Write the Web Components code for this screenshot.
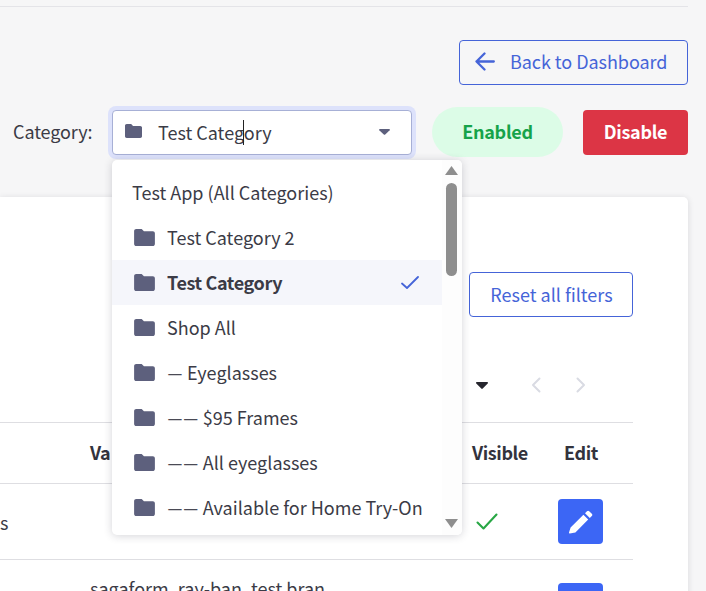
<!DOCTYPE html>
<html lang="en">
<head>
<meta charset="utf-8">
<title>Category</title>
<style>
html,body{margin:0;height:591px;overflow:hidden;background:#f6f6f7}
body{font:18px/27px "Noto Sans CJK JP","Noto Sans",sans-serif;color:#3b3b46}
</style>
</head>
<body>
<cat-page>
  <page-toolbar slot="toolbar"></page-toolbar>
  <filter-card slot="card"></filter-card>
</cat-page>
<script>
const FOLDER='<svg viewBox="0 0 22 18" aria-hidden="true"><path fill="#5d607d" d="M2.2 0H8l2.4 2.4h9.4c1.2 0 2.2 1 2.2 2.2v11.2c0 1.2-1 2.2-2.2 2.2H2.2C1 18 0 17 0 15.8V2.2C0 1 1 0 2.2 0z"/></svg>';
function def(name,html){
  customElements.define(name,class extends HTMLElement{
    constructor(){super();this.attachShadow({mode:'open'}).innerHTML=html;}
  });
}
def('cat-page',`<style>
:host{display:block;width:688px}
.rule{height:1px;background:#e4e4e8;margin-top:6px}
::slotted([slot=card]){margin-top:40px}
</style><div class="rule"></div><slot name="toolbar"></slot><slot name="card"></slot>`);

def('page-toolbar',`<style>
:host{display:block;padding-top:33px}
.back{display:flex;justify-content:flex-end}
.row{display:flex;align-items:center;margin-top:22px;height:50px}
.label{margin-left:13px;width:99px;flex:none;margin-top:-1px;letter-spacing:-.1px}
a{box-sizing:border-box;height:45px;border:1px solid #4564d8;border-radius:4px;color:#4564d8;display:flex;align-items:center;width:229px;padding:0 0 2px 15px;gap:15px;font-size:18px;letter-spacing:-.05px}
a svg{width:20px;height:19px;flex:none}
.pill{margin-left:20px;width:131px;height:50px;border-radius:25px;background:#dcfce7;color:#16a34a;font-weight:700;letter-spacing:-.3px;display:flex;align-items:center;justify-content:center;box-sizing:border-box;padding-bottom:2px}
.dis{margin-left:20px;width:105px;height:45px;border-radius:4px;background:#dc3545;color:#fff;font-weight:700;letter-spacing:-.3px;display:flex;align-items:center;justify-content:center;box-sizing:border-box;padding-bottom:2px}
</style>
<div class="back"><a><svg viewBox="0 0 20 19" fill="none" stroke="#4564d8" stroke-width="2.3" stroke-linecap="round" stroke-linejoin="round"><path d="M18.8 9.5H1.5M9.5 1.5l-8 8 8 8"/></svg>Back to Dashboard</a></div>
<div class="row"><span class="label">Category:</span><category-select></category-select><span class="pill">Enabled</span><span class="dis">Disable</span></div>`);

def('category-select',`<style>
:host{display:block;position:relative;width:300px;height:45px;flex:none}
.box{box-sizing:border-box;height:45px;background:#fff;border:1px solid #a7b0d6;border-radius:4px;box-shadow:0 0 0 4px #dde2fb;display:flex;align-items:center;padding-left:12px}
.box svg.f{width:17px;height:14px;flex:none;margin-top:-2px}
.val{margin-left:16px;position:relative}
.caret{position:absolute;left:131px;top:10px;width:1px;height:25px;background:#222}
.tri{margin-left:auto;margin-right:21px;width:11px;height:6px;flex:none;margin-top:-1px}
</style>
<div class="box"><svg class="f" viewBox="0 0 22 18">${FOLDER.match(/<path.*\/>/)[0]}</svg><span class="val">Test Category</span>
<svg class="tri" viewBox="0 0 11 7" preserveAspectRatio="none"><path fill="#5d607d" d="M1 0h9c.8 0 1.2.9.7 1.5L6.2 6.3c-.4.4-1 .4-1.4 0L.3 1.5C-.2.9.2 0 1 0z"/></svg></div>
<span class="caret"></span>
<category-menu></category-menu>`);

def('category-menu',`<style>
:host{display:flex;position:absolute;z-index:5;left:0;top:50px;width:350px;height:375px;background:#fff;border-radius:5px;box-shadow:0 1px 8px rgba(40,40,60,.2)}
.list{flex:1;padding-top:10px;overflow:hidden}
.bar{width:20px;flex:none;position:relative;background:#fdfdfd;border-radius:0 5px 5px 0}
.up,.dn{width:13px;height:9px;position:absolute;left:3px}
.up{top:6px}.dn{bottom:7px}
.th{position:absolute;left:4px;top:23px;width:11px;height:93px;border-radius:6px;background:#8e8e8e}
</style>
<div class="list">
<menu-item plain>Test App (All Categories)</menu-item>
<menu-item>Test Category 2</menu-item>
<menu-item selected>Test Category</menu-item>
<menu-item>Shop All</menu-item>
<menu-item><dash-mark>—</dash-mark> Eyeglasses</menu-item>
<menu-item><dash-mark>——</dash-mark> $95 Frames</menu-item>
<menu-item><dash-mark>——</dash-mark> All eyeglasses</menu-item>
<menu-item><dash-mark>——</dash-mark> Available for Home Try-On</menu-item>
</div>
<div class="bar">
<svg class="up" viewBox="0 0 13 9"><path fill="#8e8e8e" d="M6.5 0 13 9H0z"/></svg>
<span class="th"></span>
<svg class="dn" viewBox="0 0 13 9"><path fill="#8e8e8e" d="M0 0h13L6.5 9z"/></svg>
</div>`);

def('dash-mark',`<style>:host{display:inline;font-family:Lato,sans-serif;font-size:20px;line-height:0;color:#4a4a55}</style><slot></slot>`);

customElements.define('menu-item',class extends HTMLElement{
  constructor(){super();this.attachShadow({mode:'open'}).innerHTML=`<style>
:host{display:block;height:45px;padding-left:22px;padding-right:23px;white-space:nowrap;position:relative}
:host([plain]){padding-left:20px}
:host([selected]){background:#f5f6fb;font-weight:700;letter-spacing:-.38px}
.row{display:flex;align-items:center;height:45px}
.f{width:21px;height:17px;margin-right:12px;flex:none;display:block}
.t{display:block;white-space:pre;line-height:27px}
.c{margin-left:auto;width:18px;height:13px;flex:none}
</style><div class="row"><span id="i" style="display:contents"></span><span class="t"><slot></slot></span><span id="k" style="display:contents"></span></div>`;}
  connectedCallback(){
    if(!this.hasAttribute('plain'))this.shadowRoot.getElementById('i').innerHTML=FOLDER.replace('<svg ','<svg class="f" ');
    if(this.hasAttribute('selected'))this.shadowRoot.getElementById('k').innerHTML='<svg class="c" viewBox="0 0 18 13" fill="none" stroke="#4564d8" stroke-width="1.8" stroke-linecap="round" stroke-linejoin="round"><path d="M1 7.5 6 12 17 1"/></svg>';
  }
});

def('filter-card',`<style>
:host{display:block;height:500px;background:#fff;border-radius:0 5px 0 0;box-shadow:0 1px 6px rgba(40,40,60,.14);overflow:hidden;padding:75px 55px 0 0;box-sizing:border-box}
.reset{display:flex;justify-content:flex-end}
button{box-sizing:border-box;width:164px;height:45px;background:#fff;border:1px solid #4564d8;border-radius:4px;color:#4564d8;font:inherit;padding:0 0 0 1px}
.pager{display:flex;align-items:center;height:18px;margin-top:59px;margin-left:476px}
.pager svg{display:block;flex:none}
.tri{width:12px;height:7px}
.p1{margin-left:43px;width:10px;height:16px}
.p2{margin-left:35px;width:10px;height:16px}
</style>
<div class="reset"><button>Reset all filters</button></div>
<div class="pager">
<svg class="tri" viewBox="0 0 12 7"><path fill="#26262e" d="M1 0h10c.9 0 1.3 1 .7 1.6L6.7 6.6c-.4.4-1 .4-1.4 0L.3 1.6C-.3 1 .1 0 1 0z"/></svg>
<svg class="p1" viewBox="0 0 10 16" fill="none" stroke="#d9dbe3" stroke-width="2" stroke-linecap="round" stroke-linejoin="round"><path d="M8.5 1.5 2 8l6.5 6.5"/></svg>
<svg class="p2" viewBox="0 0 10 16" fill="none" stroke="#d9dbe3" stroke-width="2" stroke-linecap="round" stroke-linejoin="round"><path d="M1.5 1.5 8 8l-6.5 6.5"/></svg>
</div>
<product-table></product-table>`);

def('product-table',`<style>
:host{display:block;margin-top:28px;border-top:1px solid #dedee2}
.r{display:grid;grid-template-columns:8px 82px 382px 86px 75px;border-bottom:1px solid #dedee2;align-items:center}
.h{height:60px;font-weight:700;color:#33333d;letter-spacing:-.4px;box-sizing:content-box}
.h span{padding-bottom:2px}
.a{height:75px}
.b{height:91px;align-items:start}
.s{grid-column:1;white-space:nowrap;padding-top:2px}
.vis{grid-column:4}
.ed{grid-column:5;justify-self:start}
.v{grid-column:3;white-space:nowrap}
.b .v{padding-top:15px}
.h .ed{margin-left:6px}
.a .vis svg{display:block;width:22px;height:17px;margin:0 0 0 4px}
.b edit-button{margin-top:23px}
</style>
<div class="r h"><span class="v">Va</span><span class="vis">Visible</span><span class="ed">Edit</span></div>
<div class="r a"><span class="s">s</span><span class="vis"><svg viewBox="0 0 22 17" fill="none" stroke="#28a745" stroke-width="2.1" stroke-linecap="round" stroke-linejoin="round"><path d="M1.5 9.5l6 6L20.5 1.5"/></svg></span><edit-button class="ed"></edit-button></div>
<div class="r b"><span class="v">sagaform, ray-ban, test bran</span><edit-button class="ed"></edit-button></div>`);

def('edit-button',`<style>
:host{display:flex;width:45px;height:45px;background:#3c66f5;border-radius:4px;align-items:center;justify-content:center}
svg{width:24px;height:24px}
</style><svg viewBox="0 0 24 24"><path fill="#fff" d="M1.6 17.6 14.4 4.8l4.8 4.8L6.4 22.4l-5.6 1a.7.7 0 0 1-.8-.8zM16 3.2l2-2a1.6 1.6 0 0 1 2.2 0l2.6 2.6a1.6 1.6 0 0 1 0 2.2l-2 2z"/></svg>`);
</script>
</body>
</html>
